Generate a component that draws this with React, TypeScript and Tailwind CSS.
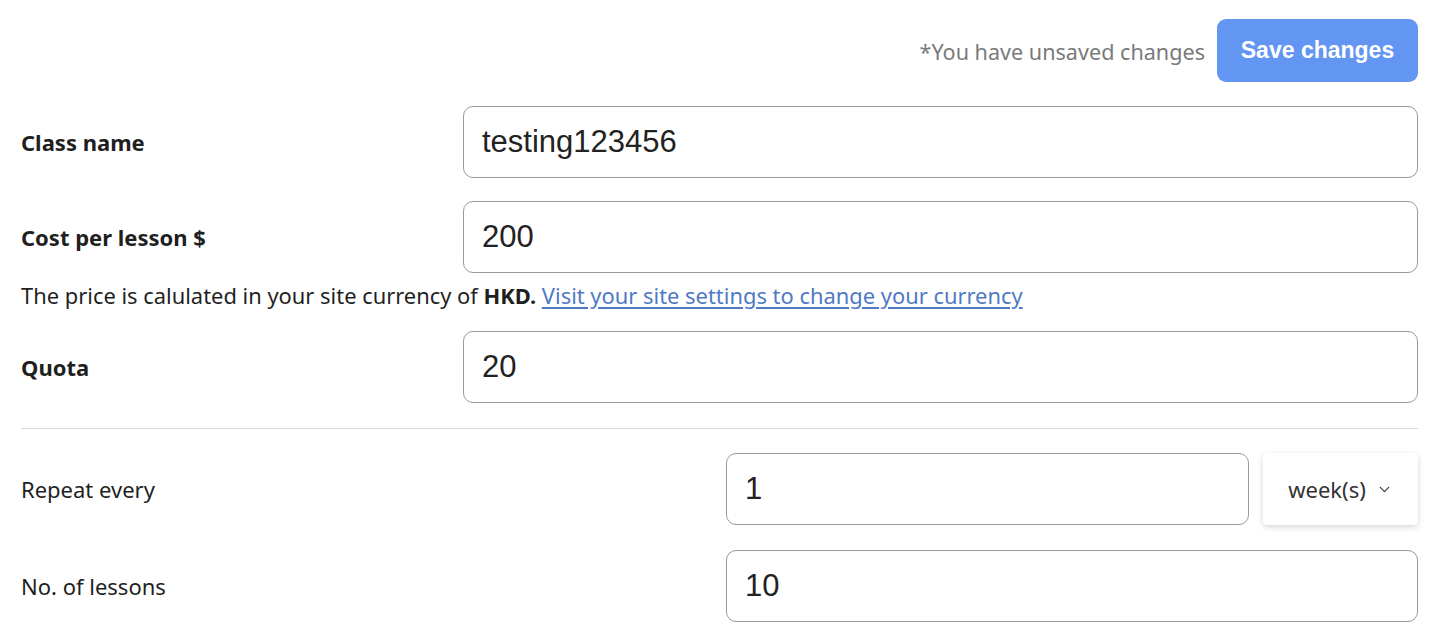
import { ChevronDown } from 'lucide-react';

function Field({ value }: { value: string }) {
  return (
    <div className="h-[72px] flex items-center px-[18px] border border-[#9a9a9a] rounded-[10px] bg-white text-[31px] text-[#222] font-['Liberation_Sans',Arial,sans-serif]">
      {value}
    </div>
  );
}

export default function App() {
  return (
    <div className="min-h-screen bg-white pl-[21px] pr-[22px] pt-[19px] font-['Noto_Sans',sans-serif] text-[#1f1f1f]">
      {/* Barre d'actions */}
      <div className="flex items-center justify-end gap-[12px]">
        <span className="mt-[3px] text-[21.6px] text-[#7a7a7a]">*You have unsaved changes</span>
        <button className="h-[63px] w-[201px] rounded-[9px] bg-[#6396f2] text-white text-[23px] font-bold font-['Liberation_Sans',Arial,sans-serif]">
          Save changes
        </button>
      </div>

      {/* Infos principales */}
      <div className="mt-[24px]">
        <div className="grid grid-cols-[442px_1fr] items-center">
          <span className="text-[22px] font-bold">Class name</span>
          <Field value="testing123456" />
        </div>
        <div className="grid grid-cols-[442px_1fr] items-center mt-[23px]">
          <span className="text-[22px] font-bold">Cost per lesson $</span>
          <Field value="200" />
        </div>
        <p className="mt-[8px] leading-[30px] text-[21.9px]">
          The price is calulated in your site currency of <b>HKD.</b>{' '}
          <a href="#" className="text-[#4f79c4] underline underline-offset-[3px]">
            Visit your site settings to change your currency
          </a>
        </p>
        <div className="grid grid-cols-[442px_1fr] items-center mt-[20px]">
          <span className="text-[22px] font-bold">Quota</span>
          <Field value="20" />
        </div>
      </div>

      <hr className="mt-[25px] border-t border-[#d9d9d9]" />

      {/* Récurrence */}
      <div className="mt-[24px]">
        <div className="grid grid-cols-[705px_1fr] items-center">
          <span className="text-[22px]">Repeat every</span>
          <div className="flex items-center gap-[14px]">
            <div className="flex-1">
              <Field value="1" />
            </div>
            <div className="h-[72px] w-[155px] flex items-center justify-center gap-[10px] rounded-[4px] bg-white shadow-[0_2px_6px_rgba(0,0,0,0.16)] text-[22px] text-[#333]">
              week(s)
              <ChevronDown size={17} strokeWidth={1.6} />
            </div>
          </div>
        </div>
        <div className="grid grid-cols-[705px_1fr] items-center mt-[25px]">
          <span className="text-[22px]">No. of lessons</span>
          <Field value="10" />
        </div>
      </div>
    </div>
  );
}
